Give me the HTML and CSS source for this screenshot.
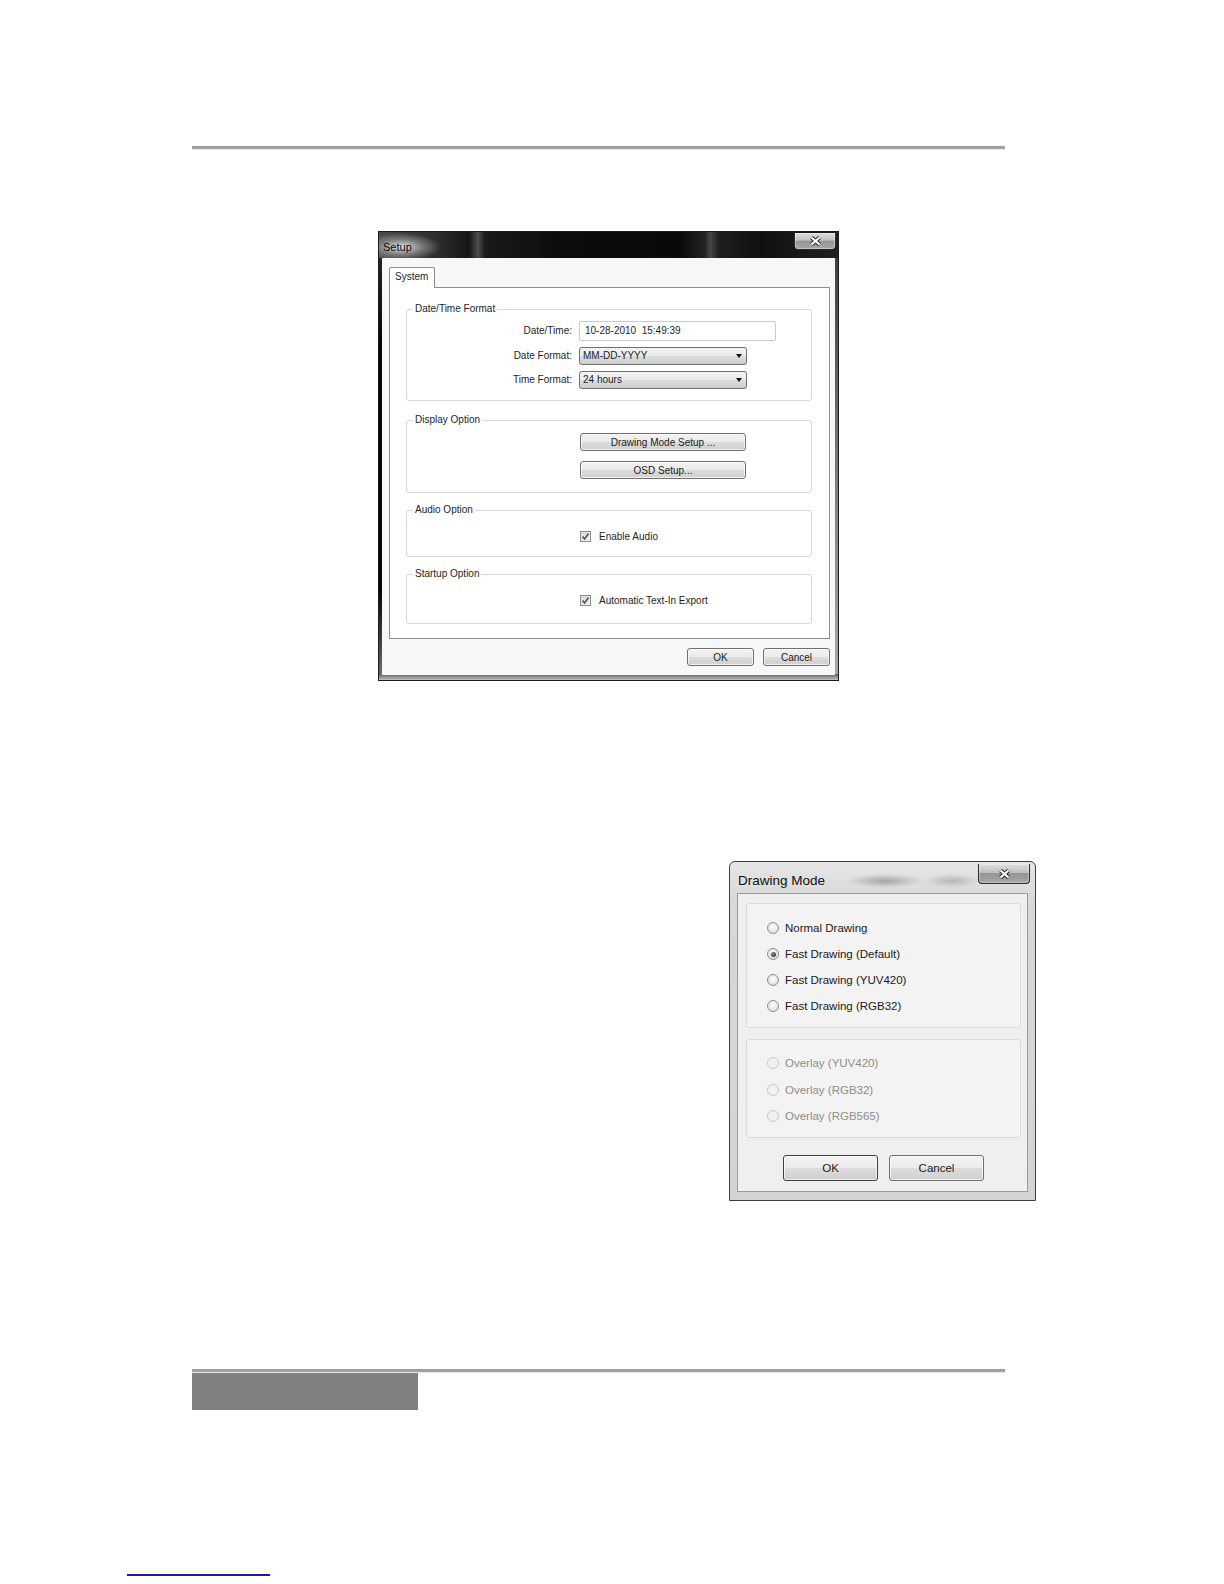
FILE: index.html
```html
<!DOCTYPE html>
<html lang="en">
<head>
<meta charset="utf-8">
<title>Setup</title>
<link rel="stylesheet" href="styles.css">
</head>
<body>
<div class="page">
  <div class="rule"></div>

  <div class="setup">
    <div class="setup-bar">
      <span class="setup-caption">Setup</span>
      <span class="close close-setup">
        <svg width="13" height="10" viewBox="0 0 13 10"><path d="M2.5 1.5 L10.5 8.5 M10.5 1.5 L2.5 8.5" stroke="#2e2e2e" stroke-width="4.2"/><path d="M2.5 1.5 L10.5 8.5 M10.5 1.5 L2.5 8.5" stroke="#ffffff" stroke-width="2.2"/></svg>
      </span>
    </div>
    <div class="setup-client">
      <div class="tabstrip"><div class="tab">System</div></div>
      <div class="pane">
        <fieldset class="grp grp-dt">
          <legend>Date/Time Format</legend>
          <div class="form">
            <span class="lbl">Date/Time:</span><span class="textbox">10-28-2010  15:49:39</span>
            <span class="lbl">Date Format:</span><span class="combo"><span>MM-DD-YYYY</span><i class="arrow"></i></span>
            <span class="lbl">Time Format:</span><span class="combo"><span>24 hours</span><i class="arrow"></i></span>
          </div>
        </fieldset>
        <fieldset class="grp grp-disp">
          <legend>Display Option</legend>
          <div class="btncol">
            <span class="btn btn-wide">Drawing Mode Setup ...</span>
            <span class="btn btn-wide">OSD Setup...</span>
          </div>
        </fieldset>
        <fieldset class="grp grp-audio">
          <legend>Audio Option</legend>
          <div class="checkrow">
            <span class="chk"><svg width="9" height="9" viewBox="0 0 9 9"><path d="M1.6 4.4 L3.6 7 L7.6 1.6" fill="none" stroke="#555555" stroke-width="1.6"/></svg></span>
            <span>Enable Audio</span>
          </div>
        </fieldset>
        <fieldset class="grp grp-start">
          <legend>Startup Option</legend>
          <div class="checkrow">
            <span class="chk"><svg width="9" height="9" viewBox="0 0 9 9"><path d="M1.6 4.4 L3.6 7 L7.6 1.6" fill="none" stroke="#555555" stroke-width="1.6"/></svg></span>
            <span>Automatic Text-In Export</span>
          </div>
        </fieldset>
      </div>
      <div class="actions">
        <span class="btn btn-sm">OK</span>
        <span class="btn btn-sm">Cancel</span>
      </div>
    </div>
  </div>

  <div class="draw">
    <div class="draw-bar">
      <span class="draw-caption">Drawing Mode</span>
      <span class="close close-draw">
        <svg width="13" height="10" viewBox="0 0 13 10"><path d="M2.5 1.5 L10.5 8.5 M10.5 1.5 L2.5 8.5" stroke="#2e2e2e" stroke-width="4.2"/><path d="M2.5 1.5 L10.5 8.5 M10.5 1.5 L2.5 8.5" stroke="#ffffff" stroke-width="2.2"/></svg>
      </span>
    </div>
    <div class="draw-client">
      <div class="opt-grp opt-grp-1">
        <div class="opt"><span class="radio"></span><span>Normal Drawing</span></div>
        <div class="opt"><span class="radio on"></span><span>Fast Drawing (Default)</span></div>
        <div class="opt"><span class="radio"></span><span>Fast Drawing (YUV420)</span></div>
        <div class="opt"><span class="radio"></span><span>Fast Drawing (RGB32)</span></div>
      </div>
      <div class="opt-grp opt-grp-2">
        <div class="opt"><span class="radio off"></span><span>Overlay (YUV420)</span></div>
        <div class="opt"><span class="radio off"></span><span>Overlay (RGB32)</span></div>
        <div class="opt"><span class="radio off"></span><span>Overlay (RGB565)</span></div>
      </div>
      <div class="draw-actions">
        <span class="btn btn-lg btn-default">OK</span>
        <span class="btn btn-lg">Cancel</span>
      </div>
    </div>
  </div>

  <div class="rule rule-bottom"></div>
  <div class="footer-box"></div>
  <div class="link-line"></div>
</div>
</body>
</html>
```

FILE: styles.css
```css
* { box-sizing: border-box; }
html, body { margin: 0; padding: 0; background: #ffffff; }
body { font-family: "Liberation Sans", Arial, sans-serif; color: #1e1e1e; }

.page { width: 1224px; height: 1584px; padding-top: 146px; overflow: hidden; }

.rule {
  margin-left: 192px;
  width: 813px;
  height: 4px;
  background: linear-gradient(#9b9b9b 0, #a6a6a6 3px, #e6e6e6 3px, #e6e6e6 4px);
}

/* ---------- Setup dialog ---------- */
.setup {
  margin: 81px 0 0 378px;
  width: 461px;
  height: 450px;
  border: 1px solid #1c1c1c;
  display: flex;
  flex-direction: column;
  background:
    linear-gradient(to bottom, #5e5e5e, #c0c0c0) left bottom / 100% 6px no-repeat,
    linear-gradient(to bottom, #2e2e2e 0, #050505 25%, #050505 80%, #707070 100%) left top / 4px 100% no-repeat,
    linear-gradient(to bottom, #3a3a3a, #808080 60%, #a8a8a8) right top / 4px 100% no-repeat,
    #7a7a7a;
}
.setup-bar {
  height: 26px;
  display: flex;
  justify-content: space-between;
  align-items: flex-start;
  background:
    radial-gradient(ellipse 40px 14px at 22px 15px, rgba(235,235,235,.95), rgba(170,170,170,.55) 55%, rgba(0,0,0,0) 100%),
    linear-gradient(to right, #4a4a4a 0, #2c2c2c 60px, #161616 90px, #3a3a3a 96px, #4d4d4d 99px, #1a1a1a 106px, #0c0c0c 180px, #090909 300px, #232323 326px, #474747 331px, #1e1e1e 340px, #101010 380px, #202020 459px);
}
.setup-caption { margin: 8px 0 0 4px; font-size: 11px; line-height: 14px; color: #0a0a0a; }

.close {
  display: flex;
  align-items: center;
  justify-content: center;
  border: 1px solid #2a2a2a;
  border-top: 0;
  border-radius: 0 0 4px 4px;
  background: linear-gradient(#dedede 0, #c0c0c0 45%, #959595 50%, #a6a6a6 100%);
  box-shadow: inset 0 0 0 1px rgba(255,255,255,.35);
}
.close-setup { width: 42px; height: 17px; margin: 1px 2px 0 0; }

.setup-client {
  flex: 1;
  margin: 0 3px 5px 3px;
  background: #f7f7f7;
  padding: 9px 5px 0 7px;
  display: flex;
  flex-direction: column;
}
.tabstrip { display: flex; height: 20px; }
.tab {
  width: 46px;
  height: 21px;
  border: 1px solid #8c8e94;
  border-bottom: 0;
  border-radius: 2px 2px 0 0;
  background: #ffffff;
  font-size: 10px;
  line-height: 18px;
  padding-left: 5px;
  position: relative;
  z-index: 1;
}
.pane {
  height: 352px;
  border: 1px solid #8c8e94;
  background: #ffffff;
  padding: 15px 17px 0 16px;
}

.grp {
  margin: 0;
  min-width: 0;
  border: 1px solid #d6d6d6;
  border-radius: 3px;
  padding: 0;
}
.grp legend {
  margin-left: 6px;
  padding: 0 2px;
  font-size: 10px;
  line-height: 12px;
  color: #1e1e1e;
}
.grp-dt { padding: 6px 0 11px 0; }
.grp-disp { margin-top: 13px; padding: 7px 0 13px 0; }
.grp-audio { margin-top: 11px; padding: 15px 0 14px 0; }
.grp-start { margin-top: 11px; padding: 15px 0 17px 0; }

.form {
  display: grid;
  grid-template-columns: 165px auto;
  column-gap: 7px;
  row-gap: 6px;
  align-items: center;
  justify-content: start;
}
.lbl { font-size: 10px; line-height: 12px; text-align: right; }
.textbox {
  width: 197px;
  height: 20px;
  border: 1px solid #cacaca;
  border-radius: 2px;
  background: #ffffff;
  font-size: 10px;
  line-height: 17px;
  padding-left: 5px;
  white-space: pre;
}
.combo {
  width: 168px;
  height: 18px;
  border: 1px solid #707070;
  border-radius: 3px;
  background: linear-gradient(#f3f3f3 0, #ebebeb 50%, #dddddd 50%, #cfcfcf 100%);
  font-size: 10px;
  line-height: 16px;
  padding-left: 3px;
  display: flex;
  justify-content: space-between;
  align-items: center;
}
.arrow {
  width: 0;
  height: 0;
  border-left: 3.5px solid transparent;
  border-right: 3.5px solid transparent;
  border-top: 4px solid #111111;
  margin-right: 4px;
}

.btn {
  display: flex;
  align-items: center;
  justify-content: center;
  border: 1px solid #707070;
  border-radius: 3px;
  background: linear-gradient(#f2f2f2 0, #ebebeb 50%, #dddddd 50%, #cfcfcf 100%);
  box-shadow: inset 0 0 0 1px rgba(255,255,255,.7);
  color: #1a1a1a;
}
.btncol { display: flex; flex-direction: column; gap: 10px; margin-left: 173px; }
.btn-wide { width: 166px; height: 18px; font-size: 10px; }
.actions { display: flex; justify-content: flex-end; gap: 9px; margin-top: 9px; }
.btn-sm { width: 67px; height: 18px; font-size: 10px; }

.checkrow { display: flex; align-items: center; gap: 8px; height: 11px; margin-left: 173px; font-size: 10px; line-height: 12px; }
.chk {
  width: 11px;
  height: 11px;
  border: 1px solid #8f8f8f;
  background: linear-gradient(135deg, #d8d8d8, #f6f6f6);
  display: flex;
}

/* ---------- Drawing Mode dialog ---------- */
.draw {
  margin: 180px 0 0 729px;
  width: 307px;
  height: 340px;
  border: 1px solid #3e3e3e;
  border-radius: 6px 6px 0 0;
  display: flex;
  flex-direction: column;
  background: linear-gradient(#e6e6e6, #d8d8d8 40px, #d4d4d4);
}
.draw-bar {
  height: 31px;
  display: flex;
  justify-content: space-between;
  align-items: flex-start;
  border-radius: 5px 5px 0 0;
  background:
    radial-gradient(ellipse 38px 7px at 155px 19px, rgba(95,95,95,.45), rgba(95,95,95,0)),
    radial-gradient(ellipse 28px 7px at 222px 19px, rgba(115,115,115,.38), rgba(115,115,115,0));
}
.draw-caption { margin: 11px 0 0 8px; font-size: 13.5px; line-height: 16px; color: #101010; }
.close-draw { width: 52px; height: 20px; margin: 2px 5px 0 0; }

.draw-client {
  flex: 1;
  margin: 0 7px 8px 7px;
  border: 1px solid #9b9b9b;
  background: #efefef;
  padding: 9px 6px 0 8px;
  display: flex;
  flex-direction: column;
}
.opt-grp {
  border: 1px solid #dadada;
  border-radius: 3px;
  background: #f3f3f3;
  padding-left: 20px;
}
.opt-grp-1 { height: 125px; padding-top: 11px; }
.opt-grp-2 { height: 99px; margin-top: 11px; padding-top: 10px; }
.opt { display: flex; align-items: center; gap: 6px; font-size: 11.5px; color: #1a1a1a; }
.opt-grp-1 .opt { height: 26px; }
.opt-grp-2 .opt { height: 26.5px; color: #8d8d8d; }
.radio {
  width: 12px;
  height: 12px;
  border-radius: 50%;
  border: 1px solid #8e8e8e;
  background: radial-gradient(circle at 50% 40%, #fdfdfd, #d6d6d6);
  display: flex;
  align-items: center;
  justify-content: center;
}
.radio.on::after {
  content: "";
  width: 5px;
  height: 5px;
  border-radius: 50%;
  background: radial-gradient(circle at 40% 35%, #8a8a8a, #1e1e1e);
}
.radio.off { border-color: #c8c8c8; background: #f1f1f1; }
.draw-actions { display: flex; justify-content: center; gap: 11px; margin-top: 17px; }
.btn-lg { width: 95px; height: 26px; font-size: 11.5px; }
.btn-default { border-color: #3f3f3f; }

/* ---------- footer ---------- */
.rule-bottom { margin-top: 168px; }
.footer-box { margin-left: 192px; width: 226px; height: 37px; background: #808080; }
.link-line { margin: 164px 0 0 127px; width: 143px; height: 2px; background: #1c1c9a; }
```
